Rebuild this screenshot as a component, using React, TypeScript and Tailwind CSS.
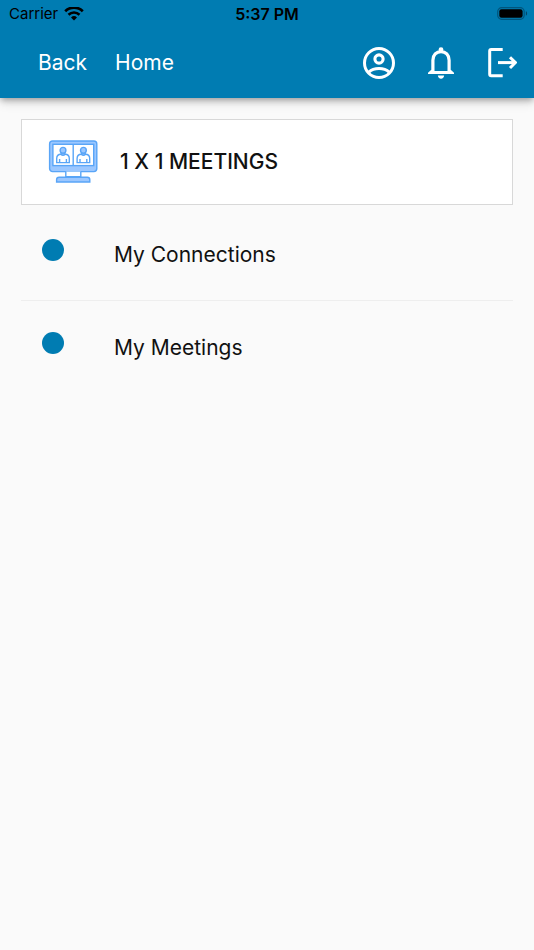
// src/App.tsx
import React from "react";

const menuItems = ["My Connections", "My Meetings"];

const WifiIcon: React.FC = () => (
  <svg viewBox="0 0 20 15" className="w-5 h-[15px]" fill="none" stroke="#000" aria-hidden="true">
    <path d="M1.2 4.2a12.6 12.6 0 0 1 17.6 0" strokeWidth="2.7" />
    <path d="M4.5 7.7a7.9 7.9 0 0 1 11 0" strokeWidth="2.6" />
    <path d="M10 13.5 7 10.4a4.3 4.3 0 0 1 6 0z" fill="#000" stroke="none" />
  </svg>
);

const BatteryIcon: React.FC = () => (
  <svg viewBox="0 0 32 14" className="w-8 h-[14px]" aria-hidden="true">
    <rect x="0.7" y="0.7" width="26.5" height="11.6" rx="4" fill="none" stroke="#00557c" strokeWidth="1.2" />
    <rect x="2.3" y="2.3" width="23.3" height="8.4" rx="2.2" fill="#000" />
    <path d="M28.9 4.3c1.6.6 1.6 3.8 0 4.4z" fill="#00476a" />
  </svg>
);

const AccountIcon: React.FC = () => (
  <svg viewBox="0 0 32 32" className="w-8 h-8" fill="none" stroke="#fff" aria-hidden="true">
    <circle cx="16" cy="16" r="14.5" strokeWidth="3" />
    <circle cx="16" cy="12" r="4.1" strokeWidth="3.1" />
    <path d="M5.8 25.2c2.4-2.3 6-3.7 10.2-3.7s7.8 1.4 10.2 3.7" strokeWidth="3" />
  </svg>
);

const BellIcon: React.FC = () => (
  <svg viewBox="0 0 26 32" className="w-[26px] h-8" fill="none" stroke="#fff" aria-hidden="true">
    <circle cx="13" cy="2.7" r="2.4" fill="#fff" stroke="none" />
    <path d="M4.9 25.5V13.2C4.9 8 8.4 4.6 13 4.6s8.1 3.4 8.1 8.6v12.3" strokeWidth="3.2" />
    <path d="M0 27v-1.2l3.3-3 3.2 1.3h13l3.2-1.3 3.3 3V27z" fill="#fff" stroke="none" />
    <path d="M9.9 28.5h6.2c0 1.8-1.4 3.2-3.1 3.2s-3.1-1.4-3.1-3.2z" fill="#fff" stroke="none" />
  </svg>
);

const LogoutIcon: React.FC = () => (
  <svg viewBox="0 0 30 32" className="w-[30px] h-8" fill="none" stroke="#fff" strokeWidth="3" aria-hidden="true">
    <path d="M15.7 2.4H4.2q-1.5 0-1.5 1.5v23.4q0 1.5 1.5 1.5h11.5" />
    <path d="M11 15.6h17" />
    <path d="M23 10.2l5.4 5.4-5.4 5.4" />
  </svg>
);

const MeetingIcon: React.FC = () => (
  <svg viewBox="0 0 50 44" className="w-[50px] h-11" fill="none" stroke="#59a5f7" strokeWidth="1.4" aria-hidden="true">
    <rect x="1.6" y="1" width="47.2" height="30.6" rx="3" fill="#9bc7ff" />
    <rect x="4.9" y="4.3" width="40.8" height="21.3" fill="#fff" />
    <path d="M25.2 4.3v21.3" />
    <path d="M17.8 31.6v5h15v-5" fill="#fff" />
    <path d="M8.6 42v-2.2c0-1.5 1-2.6 2.5-2.6h28.2c1.5 0 2.5 1.1 2.5 2.6V42z" fill="#9bc7ff" />
    {[15, 35.4].map((x) => (
      <g key={x} transform={`translate(${x} 0)`}>
        <path d="M-6.3 22.6v-4c0-2.4 1.7-4.3 4.3-4.3h4c2.6 0 4.3 1.9 4.3 4.3v4z" fill="#fff" />
        <path d="M-3.4 22.6v-3.7M3.4 22.6v-3.7" />
        <path d="M-1.8 11.7v2.8c.8 1 2.8 1 3.6 0v-2.8" fill="#9bc7ff" />
        <circle cx="0" cy="10.3" r="2.9" fill="#9bc7ff" />
      </g>
    ))}
  </svg>
);

const Header: React.FC = () => (
  <header className="relative bg-[#007cb2] shadow-[0_3px_6px_-1px_rgba(0,0,0,0.3),0_5px_10px_rgba(0,0,0,0.12)]">
    <div className="grid grid-cols-3 items-center h-7 px-[9px] text-black">
      <div className="flex items-center gap-1.5 text-[15px]">
        <span>Carrier</span>
        <WifiIcon />
      </div>
      <span className="text-center text-base font-semibold">5:37 PM</span>
      <div className="flex justify-end -mr-1">
        <BatteryIcon />
      </div>
    </div>
    <nav className="flex items-center justify-between h-[70px] pl-[38px] pr-[17px] text-white">
      <div className="flex gap-7 text-[21px]">
        <a href="#back">Back</a>
        <a href="#home">Home</a>
      </div>
      <div className="flex items-center gap-[33px]">
        <button type="button" aria-label="Profile">
          <AccountIcon />
        </button>
        <button type="button" aria-label="Notifications">
          <BellIcon />
        </button>
        <button type="button" aria-label="Log out">
          <LogoutIcon />
        </button>
      </div>
    </nav>
  </header>
);

const App: React.FC = () => {
  return (
    <div className="min-h-screen bg-[#fafafa] font-[Inter,sans-serif] text-[#111]">
      <Header />
      <main className="px-[21px] pt-[21px]">
        {/* Section title */}
        <div className="flex items-center gap-[22px] h-[86px] pl-[26px] bg-white border border-[#d8d8d8]">
          <MeetingIcon />
          <h1 className="text-[21px] font-medium">1 X 1 MEETINGS</h1>
        </div>

        {/* Menu */}
        <ul className="pt-[3px] divide-y divide-[#eeeeee]">
          {menuItems.map((item) => (
            <li key={item}>
              <a href="#menu" className="flex items-start gap-[50px] h-[92px] pl-[21px] pt-[31px] text-[21px]">
                <span className="size-[22px] shrink-0 rounded-full bg-[#007cb2]" />
                <span>{item}</span>
              </a>
            </li>
          ))}
        </ul>
      </main>
    </div>
  );
};

export default App;
